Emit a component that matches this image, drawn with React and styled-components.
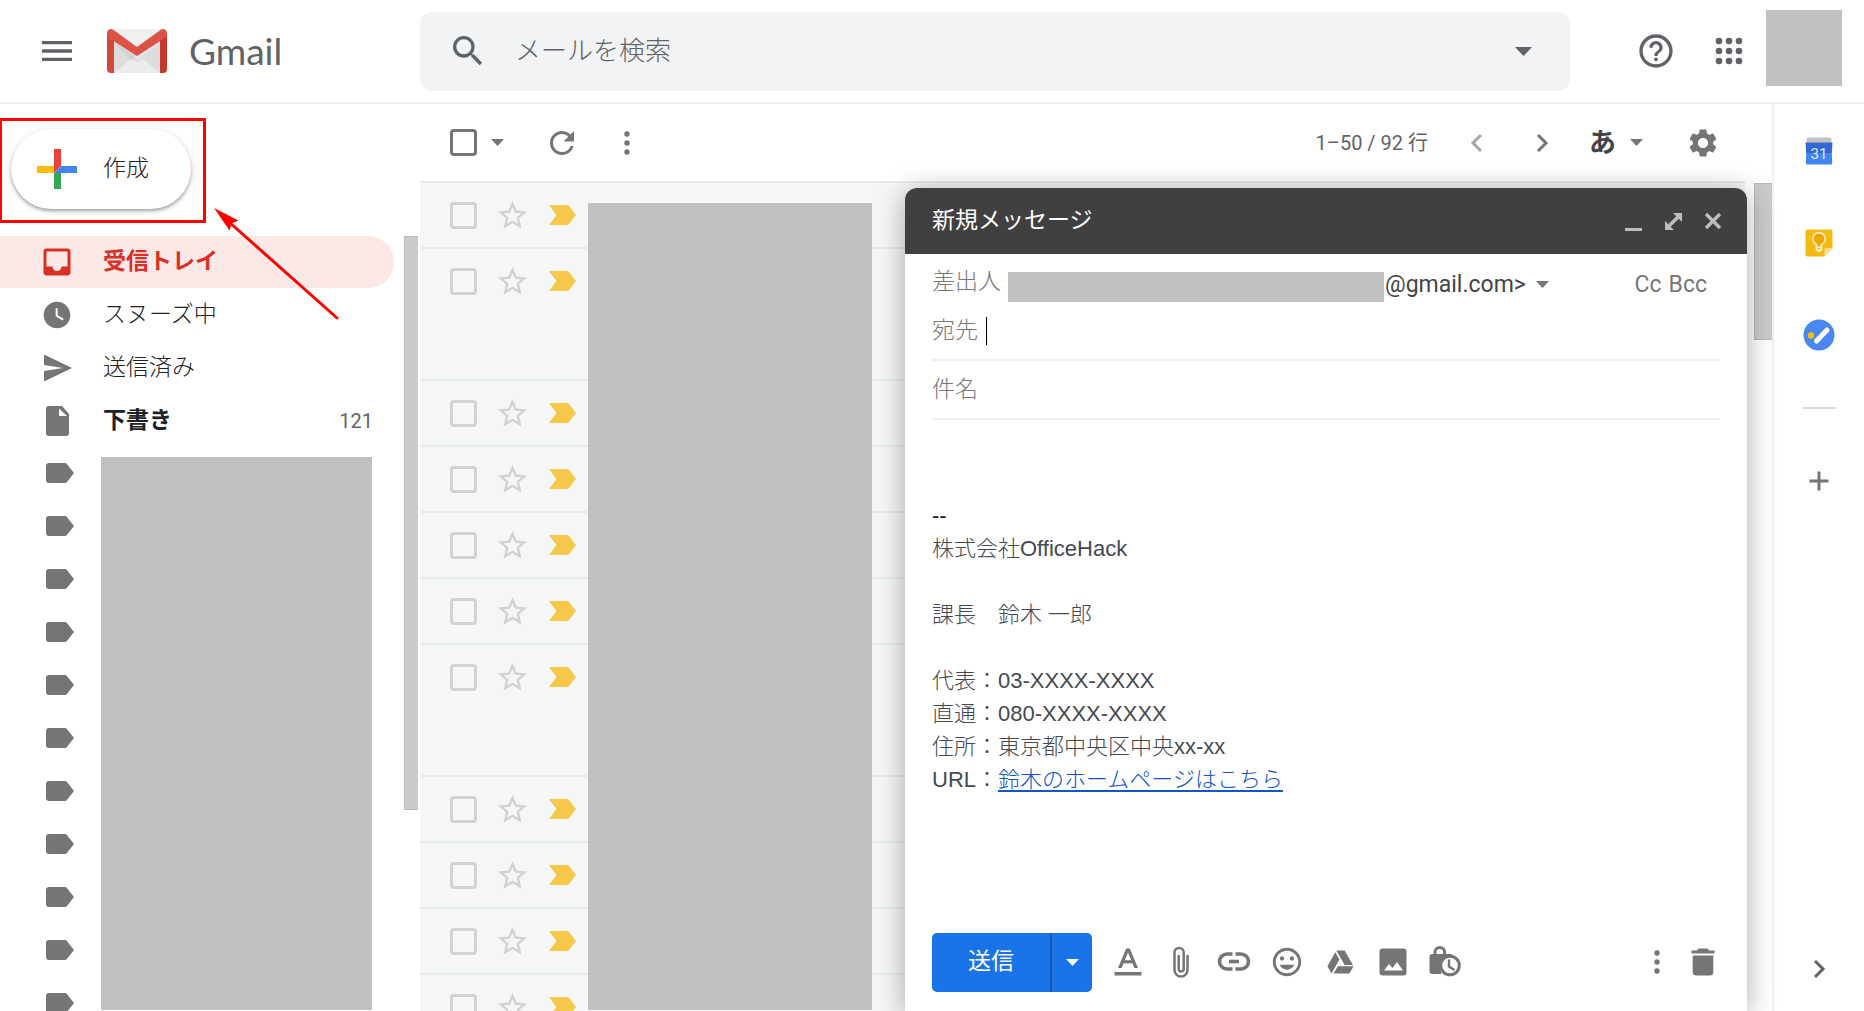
import React from "react";
import styled, { createGlobalStyle, css } from "styled-components";
import {
  MdMenu,
  MdSearch,
  MdHelpOutline,
  MdRefresh,
  MdSettings,
  MdStarBorder,
  MdWatchLater,
  MdInbox,
  MdOutlineInsertEmoticon,
} from "react-icons/md";

const sans = `Roboto, "Noto Sans CJK JP", sans-serif`;
const masked = "#c0c0c0";

const GlobalStyle = createGlobalStyle`
  *, *::before, *::after { box-sizing: border-box; }
  body { margin: 0; background: #fff; font-family: ${sans}; color: #202124; }
  button, input { font: inherit; color: inherit; }
  ul { list-style: none; margin: 0; padding: 0; }
  svg { display: block; flex: none; }
`;

const Page = styled.div`
  position: relative;
  display: flex;
  flex-direction: column;
  height: 100vh;
  overflow: hidden;
`;

const IconButton = styled.button`
  display: flex;
  align-items: center;
  justify-content: center;
  flex: none;
  width: ${(p) => (p.$narrow ? "34px" : "40px")};
  height: 40px;
  padding: 0;
  border: 0;
  background: none;
  color: ${(p) => p.$color || "#757575"};
  cursor: pointer;
`;

/* Header */
const Header = styled.header`
  display: flex;
  align-items: center;
  flex: none;
  height: 104px;
  padding-right: 22px;
  border-bottom: 2px solid #eeefef;
`;

const Brand = styled.div`
  display: flex;
  align-items: center;
  width: 420px;
  padding-left: 37px;
`;

const BrandLink = styled.a`
  display: flex;
  align-items: center;
  gap: 22px;
  margin-left: 30px;
  color: #5f6368;
  font-family: Lato, sans-serif;
  font-size: 37px;
  line-height: 44px;
  text-decoration: none;
`;

const SearchForm = styled.form`
  display: flex;
  align-items: center;
  flex: 1;
  height: 79px;
  padding: 0 27px 0 28px;
  border-radius: 12px;
  background: #f1f3f4;
`;

const SearchInput = styled.input`
  flex: 1;
  min-width: 0;
  height: 48px;
  margin-left: 27px;
  padding: 0;
  border: 0;
  outline: 0;
  background: none;
  font-size: 26px;
  font-weight: 300;
  &::placeholder { color: #5f6368; opacity: 1; }
`;

const HeaderActions = styled.div`
  display: flex;
  align-items: center;
  gap: 33px;
  margin-left: 66px;
`;

const Avatar = styled.div`
  align-self: flex-start;
  width: 76px;
  height: 76px;
  margin: 10px 0 0 17px;
  background: ${masked};
`;

const Body = styled.div`
  display: flex;
  flex: 1;
  min-height: 0;
`;

/* Sidebar */
const Sidebar = styled.aside`
  display: flex;
  flex-direction: column;
  flex: none;
  width: 420px;
`;

const ComposeButton = styled.button`
  display: flex;
  align-items: center;
  flex: none;
  gap: 26px;
  width: 180px;
  height: 80px;
  margin: 25px 0 27px 11px;
  padding: 0 0 0 26px;
  border: 0;
  border-radius: 40px;
  background: #fff;
  box-shadow: 0 2px 3px rgba(60, 64, 67, 0.35), 0 2px 6px rgba(60, 64, 67, 0.2);
  color: #202124;
  font-size: 23px;
  font-weight: 300;
  line-height: 36px;
`;

const NavArea = styled.div`
  display: flex;
  flex: 1;
  min-height: 0;
`;

const Nav = styled.nav`
  position: relative;
  width: 404px;
  overflow: hidden;
`;

const NavList = styled.ul`
  display: flex;
  flex-direction: column;
  gap: 1px;
`;

const NavLink = styled.a`
  display: flex;
  align-items: center;
  gap: 26px;
  width: 394px;
  height: 52px;
  padding: 0 21px 0 37px;
  border-radius: 0 26px 26px 0;
  color: #202124;
  font-size: 23px;
  font-weight: ${(p) => (p.$strong ? 700 : 300)};
  line-height: 36px;
  text-decoration: none;
  ${(p) =>
    p.$active &&
    css`
      background: #fce8e6;
      color: #d93025;
    `}
`;

const NavIcon = styled.span`
  display: flex;
  align-items: center;
  justify-content: center;
  width: 40px;
  height: 40px;
  color: ${(p) => (p.$active ? "#d93025" : "#757575")};
`;

const NavCount = styled.span`
  margin-left: auto;
  color: #5f6368;
  font-size: 20px;
  font-weight: 400;
`;

const LabelMask = styled.div`
  position: absolute;
  top: 221px;
  right: 32px;
  bottom: 1px;
  left: 101px;
  background: ${masked};
`;

const ScrollThumb = styled.div`
  width: ${(p) => p.$width};
  height: ${(p) => p.$height};
  border: 1px solid #b9b9b9;
  border-right: 0;
  background: #cbcbcb;
`;

/* Mail list */
const Main = styled.main`
  display: flex;
  flex-direction: column;
  flex: 1;
  min-width: 0;
`;

const Toolbar = styled.div`
  display: flex;
  align-items: center;
  justify-content: space-between;
  flex: none;
  height: 77px;
  padding: 0 49px 0 30px;
`;

const ToolGroup = styled.div`
  display: flex;
  align-items: center;
  gap: ${(p) => p.$gap || "0"};
`;

const PageRange = styled.span`
  color: #5f6368;
  font-size: 20px;
  line-height: 32px;
`;

const LanguageButton = styled.button`
  display: flex;
  align-items: center;
  padding: 0;
  border: 0;
  background: none;
  color: #444;
  font-size: 27px;
  font-weight: 700;
  line-height: 40px;
`;

const Checkbox = styled.input`
  appearance: none;
  flex: none;
  width: 27px;
  height: 27px;
  margin: 0;
  border: 3px solid ${(p) => (p.$faint ? "#d1d3d2" : "#757575")};
  border-radius: 4px;
`;

const ListArea = styled.div`
  display: flex;
  flex: 1;
  min-height: 0;
`;

const MailPane = styled.div`
  position: relative;
  flex: 1;
  overflow: hidden;
`;

const MailRow = styled.li`
  display: flex;
  align-items: flex-start;
  height: ${(p) => (p.$tall ? "132px" : "66px")};
  padding: 12px 0 0 30px;
  border-top: 2px solid #e7ebee;
  background: #f4f7f6;
`;

const RowTools = styled.div`
  display: flex;
  align-items: center;
  height: 40px;
`;

const StarButton = styled(IconButton)`
  margin: 0 10px 0 15px;
`;

const MailMask = styled.div`
  position: absolute;
  top: 22px;
  bottom: 1px;
  left: 168px;
  width: 284px;
  background: ${masked};
`;

const ScrollTrack = styled.div`
  display: flex;
  justify-content: flex-end;
  width: 27px;
  padding-top: 2px;
`;

/* Side panel */
const SidePanel = styled.aside`
  display: flex;
  flex-direction: column;
  align-items: center;
  flex: none;
  width: 92px;
  padding: 27px 0 22px;
  border-left: 2px solid #f0f0f0;
`;

const PanelApps = styled.div`
  display: flex;
  flex-direction: column;
  gap: 52px;
`;

const PanelRule = styled.hr`
  width: 33px;
  height: 2px;
  margin: 52px 0;
  border: 0;
  background: #dadada;
`;

const PanelToggle = styled(IconButton)`
  margin-top: auto;
`;

/* Message window */
const MessageWindow = styled.section`
  position: absolute;
  top: 188px;
  right: 117px;
  bottom: 0;
  display: flex;
  flex-direction: column;
  width: 842px;
  border-radius: 12px 12px 0 0;
  background: #fff;
  box-shadow: 0 4px 28px rgba(0, 10, 5, 0.34);
`;

const WindowBar = styled.div`
  display: flex;
  align-items: center;
  flex: none;
  height: 66px;
  padding: 0 14px 0 27px;
  border-radius: 12px 12px 0 0;
  background: #404040;
`;

const WindowTitle = styled.h2`
  flex: 1;
  margin: 0;
  color: #fff;
  font-size: 23px;
  font-weight: 400;
  line-height: 36px;
`;

const Fields = styled.div`
  flex: none;
  padding: 10px 27px 0;
  color: #777;
  font-size: 23px;
  font-weight: 300;
`;

const FromRow = styled.div`
  display: flex;
  align-items: center;
  height: 40px;
`;

const FromLabel = styled.span`
  align-self: flex-start;
  line-height: 36px;
`;

const FromMask = styled.span`
  align-self: flex-end;
  width: 376px;
  height: 30px;
  margin: 0 0 2px 7px;
  background: ${masked};
`;

const FromDomain = styled.span`
  margin-left: 1px;
  color: #444;
  font-weight: 400;
`;

const CopyButtons = styled.div`
  display: flex;
  gap: 7px;
  margin-left: auto;
  padding-right: 13px;
`;

const TextButton = styled.button`
  padding: 0;
  border: 0;
  background: none;
  font-weight: 400;
`;

const FieldRow = styled.div`
  display: flex;
  align-items: flex-start;
  height: ${(p) => p.$height};
  padding-top: ${(p) => p.$top};
  border-bottom: 2px solid #ebf0f1;
  line-height: 36px;
`;

const Caret = styled.span`
  width: 1px;
  height: 28px;
  margin: 4px 0 0 8px;
  background: #000;
`;

const FieldInput = styled.input`
  flex: 1;
  height: 36px;
  padding: 0;
  border: 0;
  outline: 0;
  background: none;
  color: #202124;
  &::placeholder { color: #777; opacity: 1; }
`;

const MessageBody = styled.div`
  flex: 1;
  min-height: 0;
  overflow: hidden;
  padding: 79px 27px 0;
  outline: 0;
  color: #444950;
  font-family: "Liberation Sans", "Noto Sans CJK JP", sans-serif;
  font-size: 22px;
  font-weight: 300;
  line-height: 33px;
`;

const Line = styled.div`
  height: 33px;
  color: ${(p) => p.$color || "inherit"};
`;

const BodyLink = styled.a`
  color: #1155cc;
  text-decoration: underline;
  text-decoration-thickness: 2px;
  text-underline-offset: 3px;
`;

const WindowFooter = styled.div`
  display: flex;
  align-items: center;
  flex: none;
  height: 98px;
  padding: 0 24px 0 27px;
`;

const SendGroup = styled.div`
  display: flex;
  height: 59px;
  margin-right: 16px;
  border-radius: 5px;
  overflow: hidden;
  background: #1a73e8;
`;

const SendButton = styled.button`
  width: 120px;
  padding: 0;
  border: 0;
  border-right: 2px solid #185abc;
  background: none;
  color: #fff;
  font-size: 23px;
  line-height: 36px;
`;

const SendOptions = styled(IconButton)`
  height: 59px;
`;

const FooterTools = styled.div`
  display: flex;
  flex: 1;
  gap: 13px;
`;

/* Annotation */
const Highlight = styled.div`
  position: absolute;
  top: 118px;
  left: -1px;
  width: 207px;
  height: 105px;
  border: 3px solid #ff0000;
  pointer-events: none;
`;

const Pointer = styled.svg`
  position: absolute;
  top: 200px;
  left: 206px;
  pointer-events: none;
`;

/* Icons */
const Glyph = ({ children, size = 40, box = 40 }) => (
  <svg width={size} height={size} viewBox={`0 0 ${box} ${box}`} fill="currentColor" aria-hidden="true">
    {children}
  </svg>
);

const DropArrow = ({ w = 13, h = 7 }) => (
  <svg width={w} height={h} viewBox="0 0 13 7" preserveAspectRatio="none" fill="currentColor" aria-hidden="true">
    <path d="M0 0h13L6.500 7z" />
  </svg>
);

const GmailLogo = () => (
  <svg width="60" height="44" viewBox="0 0 60 44" aria-hidden="true">
    <path d="M3 0h54v44H3z" fill="#e6e7e7" />
    <path d="M7 44V14l23 17 23-17v30z" fill="#dcdddc" />
    <path d="M7 44l17-14 6 3 6-3 17 14z" fill="#ececee" />
    <path d="M4 0h52L30 19z" fill="#eff1f1" />
    <path d="M7 8l23 18-6 5L7 14z" fill="#c9caca" opacity=".6" />
    <path d="M0 4l7 5v35H4a4 4 0 0 1-4-4z" fill="#d3473c" />
    <path d="M60 4l-7 5v35h3a4 4 0 0 0 4-4z" fill="#c23a2e" />
    <path d="M0 4.500C0 .5 3.500-1 6.500 1L30 18 53.500 1C56.500-1 60 .5 60 4.500c0 2-.7 3.500-2.500 4.800L30 27 2.500 9.300C.7 8 0 6.500 0 4.500z" fill="#de5145" />
  </svg>
);

const AppsIcon = () => (
  <Glyph>
    {[10, 20, 30].map((y) => [10, 20, 30].map((x) => <circle key={`${x}-${y}`} cx={x} cy={y} r="3.300" />))}
  </Glyph>
);

const PlusColor = () => (
  <svg width="40" height="40" viewBox="0 0 40 40" aria-hidden="true">
    <path d="M17 0h7v17l-7 7z" fill="#ea4335" />
    <path d="M0 17h17v7H0z" fill="#fbbc04" />
    <path d="M17 24h7v16h-7z" fill="#34a853" />
    <path d="M24 17h16v7H17z" fill="#4285f4" />
  </svg>
);

const SendIcon = () => <Glyph><path d="M7 6.500L35 20 7 33.500V23l19-3-19-3z" /></Glyph>;

const FileIcon = () => (
  <Glyph>
    <path fillRule="evenodd" d="M12 5h13l7 8v19a3 3 0 0 1-3 3H12a3 3 0 0 1-3-3V8a3 3 0 0 1 3-3zm10 2.500V15h8z" />
  </Glyph>
);

const LabelIcon = () => <Glyph><path d="M12 10h15.500c1.200 0 1.900.4 2.600 1.300L37 20l-6.900 8.700c-.7.9-1.400 1.300-2.600 1.300H12a3 3 0 0 1-3-3V13a3 3 0 0 1 3-3z" /></Glyph>;

const MoreIcon = () => (
  <Glyph>
    <circle cx="20" cy="11" r="2.700" />
    <circle cx="20" cy="20" r="2.700" />
    <circle cx="20" cy="29" r="2.700" />
  </Glyph>
);

const Chevron = ({ left }) => (
  <Glyph>
    <path d={left ? "M26 12l-8 8 8 8" : "M16 12l8 8-8 8"} fill="none" stroke="currentColor" strokeWidth="3" />
  </Glyph>
);

const ImportantIcon = () => (
  <svg width="27" height="20" viewBox="0 0 27 20" fill="#f5c84b" aria-hidden="true">
    <path d="M0 0h18c1 0 1.700.4 2.300 1.200L27 10l-6.700 8.800c-.6.8-1.300 1.200-2.300 1.200H0l7.500-10z" />
  </svg>
);

const MinimizeIcon = () => <Glyph><path d="M12 27h17v3H12z" /></Glyph>;
const ExpandIcon = () => (
  <Glyph>
    <path d="M20 12h9v9l-3.300-3.300-8 8L21 29h-9v-9l3.300 3.300 8-8z" />
  </Glyph>
);
const CloseIcon = () => <Glyph><path d="M13 13l14 14M27 13L13 27" stroke="currentColor" strokeWidth="3.400" /></Glyph>;

const FormatIcon = () => (
  <Glyph>
    <path d="M6.500 30h27v3.500h-27z" />
    <path fillRule="evenodd" d="M18.200 6.500h3.600L30 26h-3.700l-1.900-4.800h-8.800L13.700 26H10zM20 10.600l-3.200 7.600h6.400z" />
  </Glyph>
);
const AttachIcon = () => (
  <Glyph>
    <path d="M26.500 13v15a6.500 6.500 0 0 1-13 0V10.500a4.600 4.600 0 0 1 9.200 0V27a2.500 2.500 0 0 1-5 0V13" fill="none" stroke="currentColor" strokeWidth="2.500" />
  </Glyph>
);
const LinkIcon = () => (
  <Glyph>
    <path d="M18.500 12.500H13a7.200 7.200 0 0 0 0 15h5.500M21.500 12.500H27a7.200 7.200 0 0 1 0 15h-5.500" transform="translate(0 -.5)" fill="none" stroke="currentColor" strokeWidth="3.600" />
    <path d="M15 17.700h10v3.600H15z" />
  </Glyph>
);
const DriveIcon = () => (
  <Glyph size={29} box={24}>
    <path d="M7.710 3.500L1.150 15l3.430 6 6.550-11.500zM9.730 15L6.300 21h13.120l3.430-6zM22.280 14L15.420 2H8.580l6.840 12z" />
  </Glyph>
);
const ImageIcon = () => (
  <Glyph>
    <path fillRule="evenodd" d="M9.500 6.500h21a3 3 0 0 1 3 3v21a3 3 0 0 1-3 3h-21a3 3 0 0 1-3-3v-21a3 3 0 0 1 3-3zM11 28.500h19l-6-8.500-4.500 6-3.500-4z" />
  </Glyph>
);
const LockClockIcon = () => (
  <Glyph>
    <path d="M3.500 15a3 3 0 0 1 3-3H24a3 3 0 0 1 3 3v2a11 11 0 0 0-11.500 15H6.500a3 3 0 0 1-3-3z" />
    <path d="M9 13.500v-3.300a4.800 4.800 0 0 1 9.600 0v3.300" fill="none" stroke="currentColor" strokeWidth="3" />
    <circle cx="24" cy="23.500" r="9.300" fill="#fff" stroke="currentColor" strokeWidth="3" />
    <path d="M23 17.500v7l5.500 3.500" fill="none" stroke="currentColor" strokeWidth="2.400" />
  </Glyph>
);
const TrashIcon = () => (
  <Glyph>
    <path d="M8.500 8.500h5.300l1.700-2h9l1.700 2h5.300v3h-23z" />
    <path d="M9.700 13.500h20.600V30a3.500 3.500 0 0 1-3.500 3.500H13.200A3.500 3.500 0 0 1 9.700 30z" />
  </Glyph>
);

const CalendarIcon = () => (
  <Glyph>
    <path d="M9 6.500h22a1.500 1.500 0 0 1 1.500 1.500v4h-25V8A1.500 1.500 0 0 1 9 6.500z" fill="#c2c2c2" />
    <path d="M6.500 11.500h27L32.800 22H7.200z" fill="#3367d6" />
    <path d="M7.200 22h25.600l.4 10a1.500 1.500 0 0 1-1.500 1.500H8.300A1.500 1.500 0 0 1 6.800 32z" fill="#4285f4" />
    <text x="20" y="27.500" fill="#e1e9fa" fontFamily="Roboto, sans-serif" fontSize="15" textAnchor="middle">31</text>
  </Glyph>
);
const KeepIcon = () => (
  <Glyph>
    <path d="M8.500 6.500h23a2 2 0 0 1 2 2V25.500l-8 8H8.500a2 2 0 0 1-2-2v-23a2 2 0 0 1 2-2z" fill="#f5b912" />
    <path d="M25.500 33.500V27a2 2 0 0 1 2-2h6z" fill="#fbe09a" />
    <path d="M17.500 24v-2.500a6.200 6.200 0 1 1 5 0V24z" fill="#f2a600" stroke="#fff3d1" strokeWidth="1.600" />
    <path d="M17.500 24v3h5v-3M18.500 28.500h3" fill="none" stroke="#fff3d1" strokeWidth="1.600" />
  </Glyph>
);
const TasksIcon = () => (
  <Glyph>
    <circle cx="20" cy="20" r="15.500" fill="#4a87f3" />
    <circle cx="12" cy="20.500" r="3.200" fill="#fbbc04" />
    <path d="M17.500 26L28 15" stroke="#fff" strokeWidth="5" strokeLinecap="round" />
  </Glyph>
);
const AddIcon = () => <Glyph><path d="M18.500 10.500h3v8h8v3h-8v8h-3v-8h-8v-3h8z" /></Glyph>;

const folders = [
  { name: "受信トレイ", icon: <MdInbox size={36} />, active: true, strong: true },
  { name: "スヌーズ中", icon: <MdWatchLater size={32} /> },
  { name: "送信済み", icon: <SendIcon /> },
  { name: "下書き", icon: <FileIcon />, strong: true, count: 121 },
];

const labels = Array.from({ length: 11 }, (_, i) => i + 1);
const mails = [false, true, false, false, false, false, true, false, false, false, false].map((tall, i) => ({ id: i + 1, tall }));

const composeTools = [
  { name: "書式設定オプション", icon: <FormatIcon /> },
  { name: "ファイルを添付", icon: <AttachIcon /> },
  { name: "リンクを挿入", icon: <LinkIcon /> },
  { name: "絵文字を挿入", icon: <MdOutlineInsertEmoticon size={34} /> },
  { name: "ドライブを使用してファイルを挿入", icon: <DriveIcon /> },
  { name: "写真を挿入", icon: <ImageIcon /> },
  { name: "情報保護モード", icon: <LockClockIcon /> },
];

const TopBar = () => (
  <Header>
    <Brand>
      <IconButton aria-label="メインメニュー" $color="#5f6368"><MdMenu size={40} /></IconButton>
      <BrandLink href="#inbox"><GmailLogo />Gmail</BrandLink>
    </Brand>
    <SearchForm role="search">
      <IconButton type="button" aria-label="検索" $color="#5f6368"><MdSearch size={40} /></IconButton>
      <SearchInput type="text" placeholder="メールを検索" aria-label="メールを検索" />
      <IconButton type="button" aria-label="検索オプション" $color="#5f6368"><DropArrow w={17} h={9} /></IconButton>
    </SearchForm>
    <HeaderActions>
      <IconButton aria-label="サポート" $color="#5f6368"><MdHelpOutline size={40} /></IconButton>
      <IconButton aria-label="アプリ" $color="#5f6368"><AppsIcon /></IconButton>
    </HeaderActions>
    <Avatar />
  </Header>
);

const Navigation = () => (
  <Sidebar>
    <ComposeButton><PlusColor />作成</ComposeButton>
    <NavArea>
      <Nav>
        <NavList>
          {folders.map((f) => (
            <li key={f.name}>
              <NavLink href="#folder" $active={f.active} $strong={f.strong}>
                <NavIcon $active={f.active}>{f.icon}</NavIcon>
                {f.name}
                {f.count && <NavCount>{f.count}</NavCount>}
              </NavLink>
            </li>
          ))}
        </NavList>
        <NavList>
          {labels.map((n) => (
            <li key={n}>
              <NavLink href="#label" aria-label={`ラベル ${n}`}>
                <NavIcon><LabelIcon /></NavIcon>
              </NavLink>
            </li>
          ))}
        </NavList>
        <LabelMask />
      </Nav>
      <ScrollThumb $width="14px" $height="74%" />
    </NavArea>
  </Sidebar>
);

const MailList = () => (
  <Main>
    <Toolbar>
      <ToolGroup $gap="25px">
        <ToolGroup>
          <Checkbox type="checkbox" aria-label="すべて選択" />
          <IconButton aria-label="選択オプション"><DropArrow /></IconButton>
        </ToolGroup>
        <IconButton aria-label="更新"><MdRefresh size={36} /></IconButton>
        <IconButton aria-label="その他"><MoreIcon /></IconButton>
      </ToolGroup>
      <ToolGroup $gap="27px">
        <PageRange>1–50 / 92 行</PageRange>
        <IconButton aria-label="前へ" $color="#a8a8a8"><Chevron left /></IconButton>
        <IconButton aria-label="次へ"><Chevron /></IconButton>
        <LanguageButton aria-label="入力ツール">
          あ
          <IconButton as="span"><DropArrow /></IconButton>
        </LanguageButton>
        <IconButton aria-label="設定"><MdSettings size={34} /></IconButton>
      </ToolGroup>
    </Toolbar>
    <ListArea>
      <MailPane>
        <ul>
          {mails.map((m) => (
            <MailRow key={m.id} $tall={m.tall}>
              <RowTools>
                <Checkbox type="checkbox" $faint aria-label={`メール ${m.id} を選択`} />
                <StarButton aria-label="スター" $color="#d1d3d2"><MdStarBorder size={35} /></StarButton>
                <IconButton aria-label="重要"><ImportantIcon /></IconButton>
              </RowTools>
            </MailRow>
          ))}
        </ul>
        <MailMask />
      </MailPane>
      <ScrollTrack><ScrollThumb $width="18px" $height="19%" /></ScrollTrack>
    </ListArea>
  </Main>
);

const Addons = () => (
  <SidePanel>
    <PanelApps>
      <IconButton aria-label="カレンダー"><CalendarIcon /></IconButton>
      <IconButton aria-label="Keep"><KeepIcon /></IconButton>
      <IconButton aria-label="ToDo リスト"><TasksIcon /></IconButton>
    </PanelApps>
    <PanelRule />
    <IconButton aria-label="アドオンを取得"><AddIcon /></IconButton>
    <PanelToggle aria-label="サイドパネルを非表示" $color="#5f6368"><Chevron /></PanelToggle>
  </SidePanel>
);

const NewMessage = () => (
  <MessageWindow aria-label="新規メッセージ">
    <WindowBar>
      <WindowTitle>新規メッセージ</WindowTitle>
      <IconButton aria-label="最小化" $color="#bdbdbd"><MinimizeIcon /></IconButton>
      <IconButton aria-label="全画面表示" $color="#bdbdbd"><ExpandIcon /></IconButton>
      <IconButton aria-label="閉じる" $color="#bdbdbd"><CloseIcon /></IconButton>
    </WindowBar>
    <Fields>
      <FromRow>
        <FromLabel>差出人</FromLabel>
        <FromMask />
        <FromDomain>@gmail.com&gt;</FromDomain>
        <IconButton $narrow aria-label="差出人を選択"><DropArrow /></IconButton>
        <CopyButtons>
          <TextButton>Cc</TextButton>
          <TextButton>Bcc</TextButton>
        </CopyButtons>
      </FromRow>
      <FieldRow $height="57px" $top="9px">
        <label htmlFor="to">宛先</label>
        <Caret />
        <FieldInput id="to" type="text" />
      </FieldRow>
      <FieldRow $height="59px" $top="11px">
        <FieldInput id="subject" type="text" placeholder="件名" aria-label="件名" />
      </FieldRow>
    </Fields>
    <MessageBody contentEditable suppressContentEditableWarning role="textbox" aria-label="メッセージ本文" spellCheck={false}>
      <Line $color="#222">--</Line>
      <Line>株式会社OfficeHack</Line>
      <Line />
      <Line>課長　鈴木 一郎</Line>
      <Line />
      <Line>代表：03-XXXX-XXXX</Line>
      <Line>直通：080-XXXX-XXXX</Line>
      <Line>住所：東京都中央区中央xx-xx</Line>
      <Line>URL：<BodyLink href="#home">鈴木のホームページはこちら</BodyLink></Line>
    </MessageBody>
    <WindowFooter>
      <SendGroup>
        <SendButton>送信</SendButton>
        <SendOptions aria-label="その他の送信オプション" $color="#fff"><DropArrow /></SendOptions>
      </SendGroup>
      <FooterTools>
        {composeTools.map((t) => (
          <IconButton key={t.name} aria-label={t.name}>{t.icon}</IconButton>
        ))}
      </FooterTools>
      <ToolGroup $gap="6px">
        <IconButton aria-label="その他のオプション"><MoreIcon /></IconButton>
        <IconButton aria-label="下書きを破棄"><TrashIcon /></IconButton>
      </ToolGroup>
    </WindowFooter>
  </MessageWindow>
);

export default function App() {
  return (
    <>
      <GlobalStyle />
      <Page lang="ja">
        <TopBar />
        <Body>
          <Navigation />
          <MailList />
          <Addons />
        </Body>
        <NewMessage />
        <Highlight />
        <Pointer width="140" height="125" viewBox="206 200 140 125" aria-hidden="true">
          <path d="M337 318L229 222" stroke="#f00" strokeWidth="3" strokeLinecap="round" />
          <path d="M214 208l24.500 12.500-7 3-2 7z" fill="#f00" />
        </Pointer>
      </Page>
    </>
  );
}
